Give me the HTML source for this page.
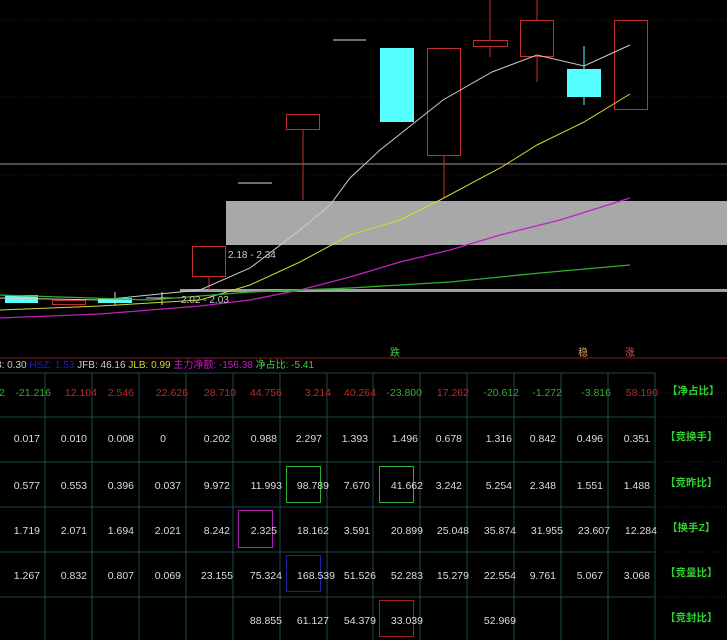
<!DOCTYPE html>
<html><head><meta charset="utf-8"><style>
body{margin:0;background:#000;width:727px;height:640px;overflow:hidden}
svg{display:block}
text{font-family:"Liberation Sans","Noto Sans CJK SC",sans-serif}
</style></head><body>
<svg width="727" height="640" xmlns="http://www.w3.org/2000/svg">
<rect width="727" height="640" fill="#000"/>
<g stroke="#3a0c0c" stroke-dasharray="1 2" stroke-width="1">
<line x1="0" y1="20" x2="727" y2="20"/><line x1="0" y1="97" x2="727" y2="97"/><line x1="0" y1="175" x2="727" y2="175"/><line x1="0" y1="244" x2="727" y2="244"/>
</g>
<line x1="0" y1="164" x2="727" y2="164" stroke="#9a9a9a"/>
<rect x="226" y="201" width="501" height="44" fill="#a8a8a8"/>
<rect x="180" y="289" width="547" height="3" fill="#a0a0a0"/>
<g fill="none" stroke="#c03030">
<rect x="192.5" y="246.5" width="33" height="30"/><line x1="209" y1="277" x2="209" y2="290"/>
<rect x="286.5" y="114.5" width="33" height="15"/><line x1="303" y1="130" x2="303" y2="200"/>
<rect x="427.5" y="48.5" width="33" height="107"/><line x1="444" y1="156" x2="444" y2="197"/>
<rect x="473.5" y="40.5" width="34" height="6"/><line x1="490" y1="0" x2="490" y2="40"/><line x1="490" y1="47" x2="490" y2="57"/>
<rect x="520.5" y="20.5" width="33" height="36"/><line x1="537" y1="0" x2="537" y2="20"/><line x1="537" y1="57" x2="537" y2="82"/>
<rect x="614.5" y="20.5" width="33" height="89"/>
<rect x="52.5" y="300.5" width="33" height="4"/>
</g>
<g fill="#55ffff">
<rect x="5" y="295" width="33" height="8"/>
<rect x="98" y="298" width="34" height="5"/>
<rect x="380" y="48" width="34" height="74"/>
<rect x="567" y="69" width="34" height="28"/>
</g>
<line x1="584" y1="46" x2="584" y2="105" stroke="#55ffff"/>
<g stroke="#ddd"><line x1="238" y1="183" x2="272" y2="183"/><line x1="333" y1="40" x2="366" y2="40"/><line x1="146" y1="298" x2="180" y2="298"/><line x1="162" y1="292" x2="162" y2="305"/><line x1="115" y1="292" x2="115" y2="305"/></g>
<polyline fill="none" stroke="#ccc" points="0,298 100,300 200,290 250,268 300,230 330,205 350,178 380,150 443,100 492,72 537,55 584,66 630,45"/>
<polyline fill="none" stroke="#d8d830" points="0,310 100,306 200,300 250,285 300,262 350,235 400,220 440,200 500,168 537,145 584,122 630,94"/>
<polyline fill="none" stroke="#c020c0" stroke-width="1.3" points="0,318 100,314 200,306 250,300 300,290 350,277 400,262 450,250 500,235 560,220 630,198"/>
<polyline fill="none" stroke="#30b030" stroke-width="1.3" points="0,295 150,300 250,292 350,288 450,282 540,273 630,265"/>
<text x="228" y="258" font-size="10" fill="#ccc">2.18 - 2.34</text>
<text x="181" y="303" font-size="10" fill="#ccc">2.02 - 2.03</text>
<line x1="0" y1="358" x2="727" y2="358" stroke="#8a1a1a"/>
<text x="390" y="356" font-size="10" fill="#4c4">跌</text>
<text x="578" y="356" font-size="10" fill="#d9a060">稳</text>
<text x="625" y="356" font-size="10" fill="#e05050">涨</text>
<g font-size="10">
<text x="-4" y="368" fill="#ccc">8: 0.30 <tspan fill="#2020c0">HSZ: 1.53</tspan> JFB: 46.16 <tspan fill="#d8d830">JLB: 0.99</tspan> <tspan fill="#c020c0">主力净额: -156.38</tspan> <tspan fill="#4c4">净占比: -5.41</tspan></text>
</g>
<g stroke="#1d4a48">
<line x1="0" y1="373" x2="655" y2="373"/><line x1="0" y1="417" x2="655" y2="417"/><line x1="0" y1="462" x2="655" y2="462"/><line x1="0" y1="507" x2="655" y2="507"/><line x1="0" y1="552" x2="655" y2="552"/><line x1="0" y1="597" x2="655" y2="597"/>
<line x1="45" y1="373" x2="45" y2="640"/><line x1="92" y1="373" x2="92" y2="640"/><line x1="139" y1="373" x2="139" y2="640"/><line x1="186" y1="373" x2="186" y2="640"/><line x1="233" y1="373" x2="233" y2="640"/><line x1="280" y1="373" x2="280" y2="640"/><line x1="327" y1="373" x2="327" y2="640"/><line x1="373" y1="373" x2="373" y2="640"/><line x1="420" y1="373" x2="420" y2="640"/><line x1="467" y1="373" x2="467" y2="640"/><line x1="514" y1="373" x2="514" y2="640"/><line x1="561" y1="373" x2="561" y2="640"/><line x1="608" y1="373" x2="608" y2="640"/><line x1="655" y1="373" x2="655" y2="640"/>
</g>
<g stroke="#4a1818" stroke-dasharray="1 2"><line x1="655" y1="393" x2="727" y2="393"/><line x1="655" y1="417" x2="727" y2="417"/><line x1="655" y1="462" x2="727" y2="462"/><line x1="655" y1="507" x2="727" y2="507"/><line x1="655" y1="552" x2="727" y2="552"/><line x1="655" y1="597" x2="727" y2="597"/></g>
<g fill="none"><rect x="286.5" y="466.5" width="34" height="36" stroke="#30b030"/><rect x="379.5" y="466.5" width="34" height="36" stroke="#30b030"/><rect x="238.5" y="510.5" width="34" height="37" stroke="#b020b0"/><rect x="286.5" y="555.5" width="34" height="36" stroke="#2020a0"/><rect x="379.5" y="600.5" width="34" height="36" stroke="#a02020"/></g>
<g font-size="10.5" text-anchor="end">
<g fill="#30b030"><text x="5" y="396">2</text><text x="51" y="396">-21.216</text><text x="422" y="396">-23.800</text><text x="519" y="396">-20.612</text><text x="562" y="396">-1.272</text><text x="611" y="396">-3.816</text></g>
<g fill="#c02828"><text x="97" y="396">12.104</text><text x="134" y="396">2.546</text><text x="188" y="396">22.626</text><text x="236" y="396">28.710</text><text x="282" y="396">44.756</text><text x="331" y="396">3.214</text><text x="376" y="396">40.264</text><text x="469" y="396">17.262</text><text x="658" y="396">58.190</text></g>
<g fill="#ddd">
<text x="40" y="442">0.017</text><text x="87" y="442">0.010</text><text x="134" y="442">0.008</text><text x="166" y="442">0</text><text x="230" y="442">0.202</text><text x="277" y="442">0.988</text><text x="322" y="442">2.297</text><text x="368" y="442">1.393</text><text x="418" y="442">1.496</text><text x="462" y="442">0.678</text><text x="512" y="442">1.316</text><text x="556" y="442">0.842</text><text x="603" y="442">0.496</text><text x="650" y="442">0.351</text>
<text x="40" y="489">0.577</text><text x="87" y="489">0.553</text><text x="134" y="489">0.396</text><text x="181" y="489">0.037</text><text x="230" y="489">9.972</text><text x="282" y="489">11.993</text><text x="329" y="489">98.789</text><text x="370" y="489">7.670</text><text x="423" y="489">41.662</text><text x="462" y="489">3.242</text><text x="512" y="489">5.254</text><text x="556" y="489">2.348</text><text x="603" y="489">1.551</text><text x="650" y="489">1.488</text>
<text x="40" y="534">1.719</text><text x="87" y="534">2.071</text><text x="134" y="534">1.694</text><text x="181" y="534">2.021</text><text x="230" y="534">8.242</text><text x="277" y="534">2.325</text><text x="329" y="534">18.162</text><text x="370" y="534">3.591</text><text x="423" y="534">20.899</text><text x="469" y="534">25.048</text><text x="516" y="534">35.874</text><text x="563" y="534">31.955</text><text x="610" y="534">23.607</text><text x="657" y="534">12.284</text>
<text x="40" y="579">1.267</text><text x="87" y="579">0.832</text><text x="134" y="579">0.807</text><text x="181" y="579">0.069</text><text x="233" y="579">23.155</text><text x="282" y="579">75.324</text><text x="335" y="579">168.539</text><text x="376" y="579">51.526</text><text x="423" y="579">52.283</text><text x="469" y="579">15.279</text><text x="516" y="579">22.554</text><text x="556" y="579">9.761</text><text x="603" y="579">5.067</text><text x="650" y="579">3.068</text>
<text x="282" y="624">88.855</text><text x="329" y="624">61.127</text><text x="376" y="624">54.379</text><text x="423" y="624">33.039</text><text x="516" y="624">52.969</text>
</g></g>
<g font-size="10.5" fill="#30d030" font-weight="bold">
<text x="667" y="394">【净占比】</text><text x="665" y="440">【竞换手】</text><text x="665" y="486">【竞昨比】</text><text x="667" y="531">【换手Z】</text><text x="665" y="576">【竞量比】</text><text x="665" y="621">【竞封比】</text>
</g>
</svg>
</body></html>
